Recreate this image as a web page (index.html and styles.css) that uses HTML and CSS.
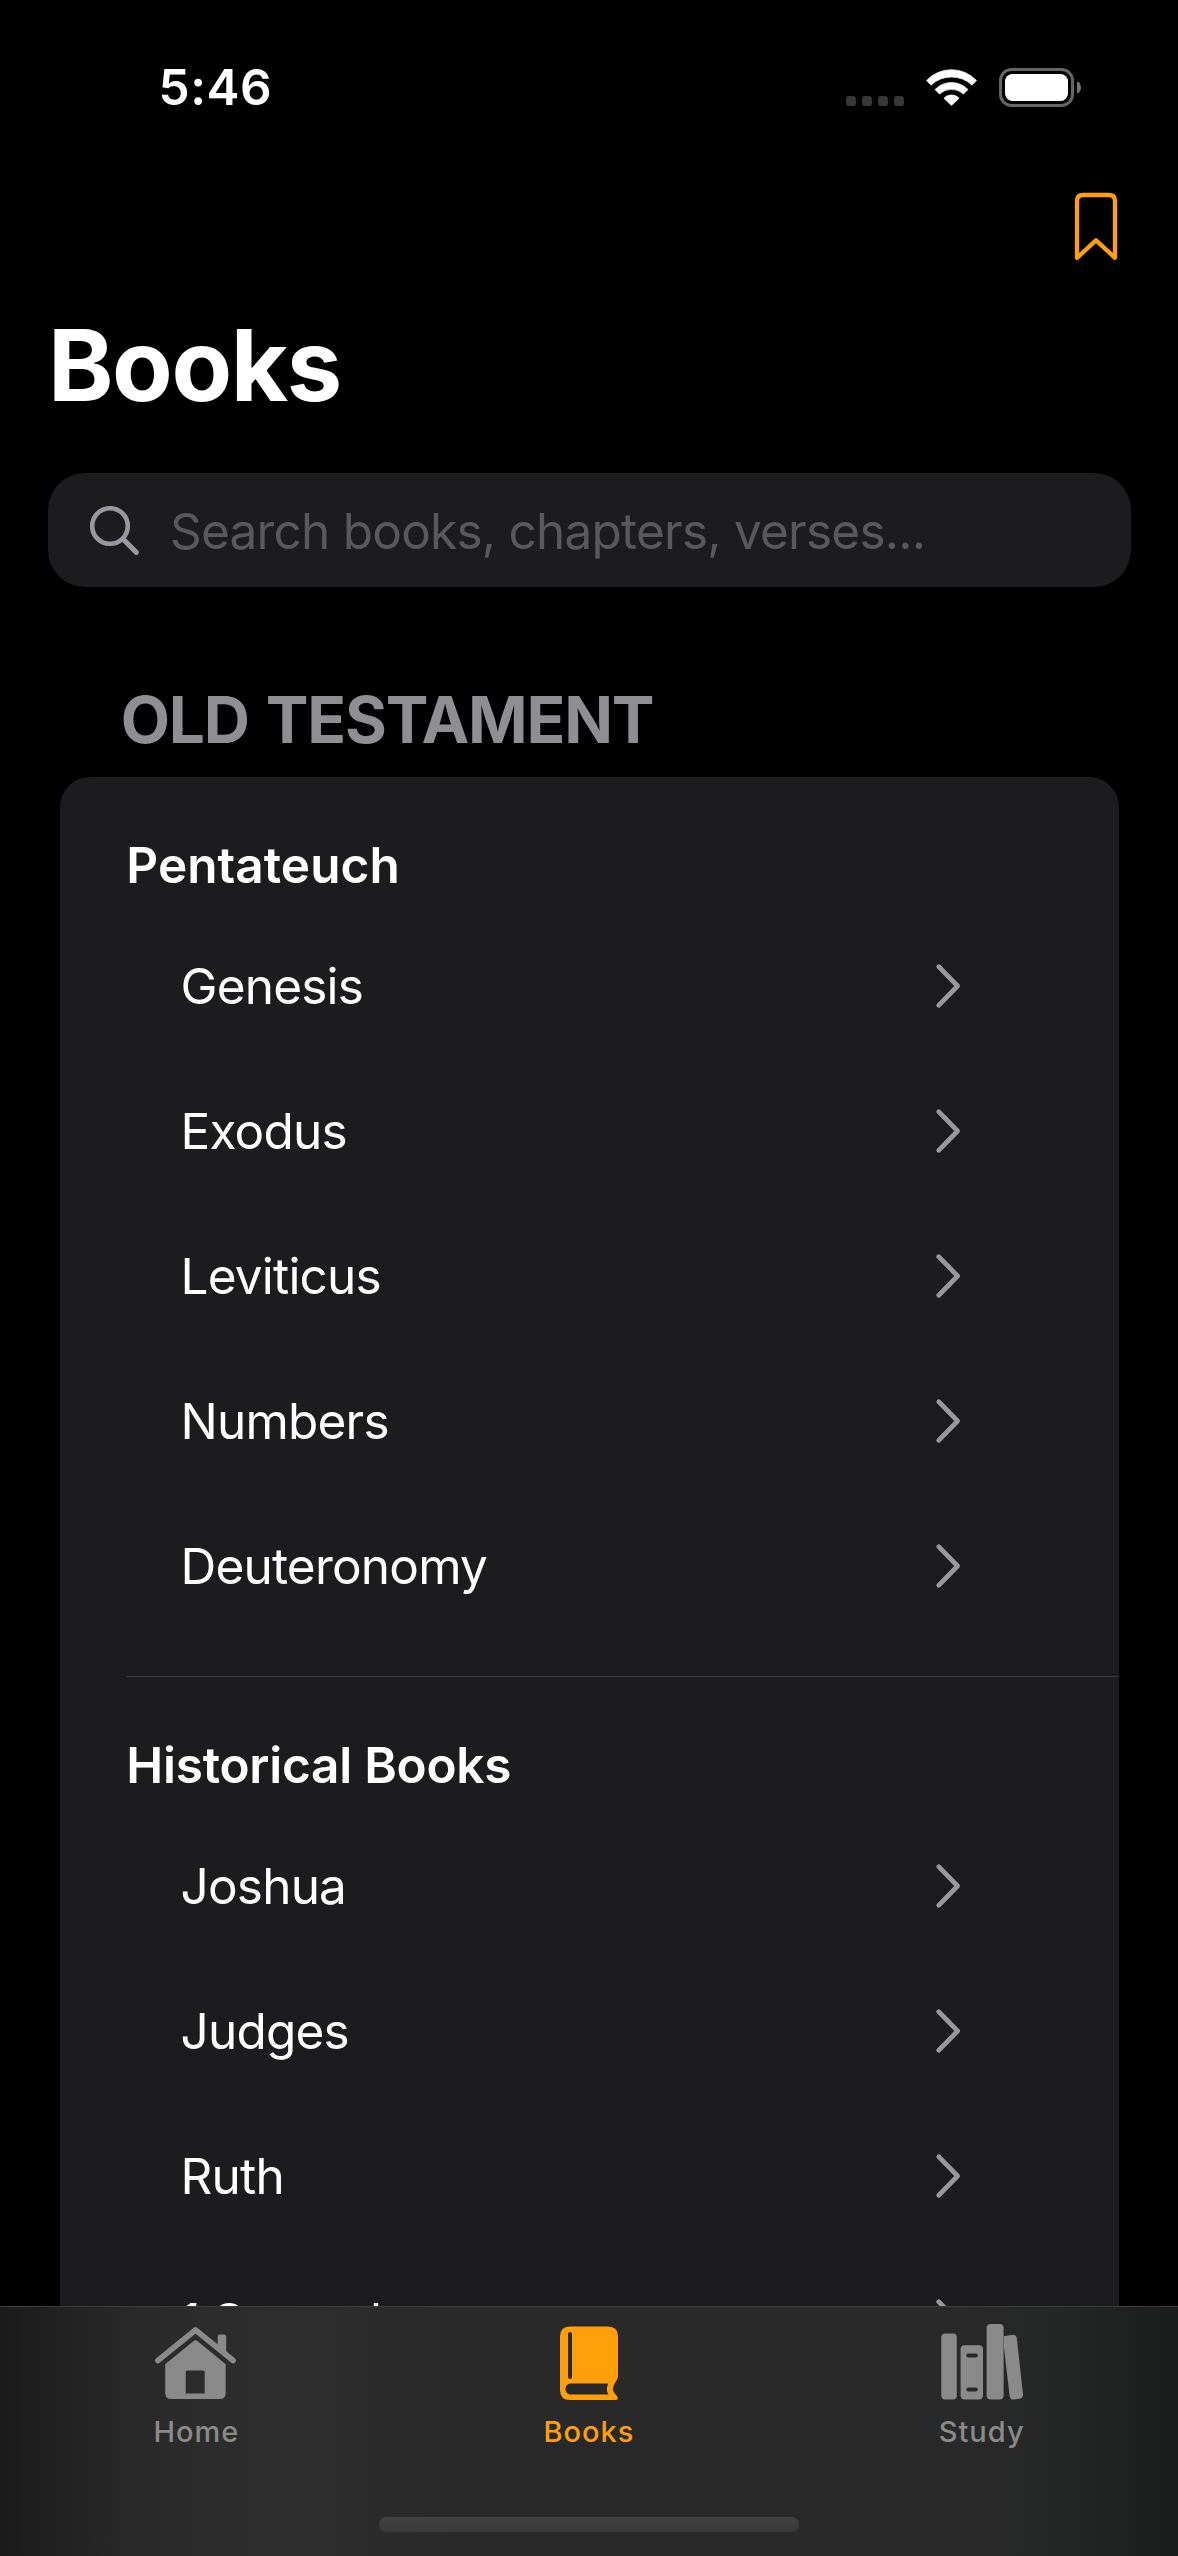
FILE: index.html
```html
<!DOCTYPE html>
<html lang="en">
<head>
<meta charset="utf-8">
<title>Books</title>
<link rel="stylesheet" href="styles.css">
</head>
<body>
<svg width="0" height="0" class="symbols" aria-hidden="true">
  <symbol id="chevron" viewBox="0 0 26 46"><path d="M3.7 3.7 22.6 23 3.7 42.3" fill="none" stroke="currentColor" stroke-width="4.7" stroke-linecap="round" stroke-linejoin="round"/></symbol>
</svg>
<div class="app">
  <main class="screen">
    <header class="status">
      <time class="clock">5:46</time>
      <div class="indicators">
        <div class="signal"><i></i><i></i><i></i><i></i></div>
        <svg class="wifi" width="51" height="37" viewBox="0 0 51 37" fill="#fff">
          <path stroke="#fff" stroke-width=".7" stroke-linejoin="round" d="M.5 11.6A34 34 0 0 1 50.5 11.6L46 16.2A29.7 29.7 0 0 0 5 16.2ZM9 20.5A23 23 0 0 1 42 20.5L37.5 25A17.7 17.7 0 0 0 13.5 25ZM17.9 29.2A10.4 10.4 0 0 1 33.1 29.2L25.5 36.6Z"/>
        </svg>
        <svg class="battery" width="82" height="39" viewBox="0 0 82 39">
          <rect x="1.5" y="1.5" width="72" height="36" rx="11" fill="none" stroke="#666" stroke-width="3"/>
          <rect x="6" y="6" width="63" height="27" rx="7.5" fill="#fff"/>
          <path d="M78 13.2C83.3 15.5 83.3 23.5 78 25.8Z" fill="#757575"/>
        </svg>
      </div>
    </header>
    <div class="toolbar">
      <svg width="44" height="70" viewBox="0 0 44 70"><path d="M3 65.8V9Q3 3 9 3H35Q41 3 41 9V65.8L22 48.3Z" fill="none" stroke="#ff9f0a" stroke-width="4.3" stroke-linejoin="round"/></svg>
    </div>
    <h1 class="title">Books</h1>
    <div class="search">
      <svg width="50" height="50" viewBox="0 0 50 50" fill="none" stroke="#98989f" stroke-width="4.6" stroke-linecap="round"><circle cx="20" cy="20" r="17.8"/><path d="M33 33 46.3 46.3" stroke-width="5.2"/></svg>
      <span>Search books, chapters, verses...</span>
    </div>
    <h2 class="testament">OLD TESTAMENT</h2>
    <div class="card">
      <section class="group">
        <h3>Pentateuch</h3>
        <ul>
          <li>Genesis<svg class="chev"><use href="#chevron"/></svg></li>
          <li>Exodus<svg class="chev"><use href="#chevron"/></svg></li>
          <li>Leviticus<svg class="chev"><use href="#chevron"/></svg></li>
          <li>Numbers<svg class="chev"><use href="#chevron"/></svg></li>
          <li>Deuteronomy<svg class="chev"><use href="#chevron"/></svg></li>
        </ul>
      </section>
      <section class="group">
        <h3 class="long">Historical Books</h3>
        <ul>
          <li>Joshua<svg class="chev"><use href="#chevron"/></svg></li>
          <li>Judges<svg class="chev"><use href="#chevron"/></svg></li>
          <li>Ruth<svg class="chev"><use href="#chevron"/></svg></li>
          <li>1 Samuel<svg class="chev"><use href="#chevron"/></svg></li>
        </ul>
      </section>
    </div>
  </main>
  <footer class="tabbar">
    <nav class="tabs">
      <a class="tab">
        <svg width="90" height="80" viewBox="0 0 90 80" fill="currentColor">
          <path d="M6.9 36.5 44.5 6 82.1 36.5" fill="none" stroke="currentColor" stroke-width="5.6" stroke-linecap="round" stroke-linejoin="round"/>
          <path d="M66.7 24V12.5Q66.7 10.5 68.7 10.5H73.2Q75.2 10.5 75.2 12.5V31Z"/>
          <path fill-rule="evenodd" d="M42.6 17Q44.5 15.4 46.4 17L74.7 40.3V69Q74.7 75 68.7 75H20.2Q14.2 75 14.2 69V40.3ZM36.2 46.5Q34.7 46.5 34.7 48V69.5H53.7V48Q53.7 46.5 52.2 46.5Z"/>
        </svg>
        <span>Home</span>
      </a>
      <a class="tab active">
        <svg width="90" height="80" viewBox="0 0 90 80" fill="currentColor">
          <path fill-rule="evenodd" d="M26 2.5H64Q74 2.5 74 12.5V52Q74 55.5 71.5 58Q66.3 65 71.5 70.5L73 72Q75.2 75.8 71.5 76H26Q16 76 16 66V12.5Q16 2.5 26 2.5ZM26 8Q24 8 24 10V53Q24 55 26 55Q28 55 28 53V10Q28 8 26 8ZM27 59.5C19.7 59.5 19.7 70.5 27 70.5H64.4Q61.3 65 64.3 59.5Z"/>
        </svg>
        <span>Books</span>
      </a>
      <a class="tab">
        <svg width="90" height="80" viewBox="0 0 90 80" fill="currentColor">
          <rect x="4.3" y="9.5" width="15.5" height="66" rx="4"/>
          <path fill-rule="evenodd" d="M27.6 21.3H42Q46 21.3 46 25.3V71.5Q46 75.5 42 75.5H27.6Q23.6 75.5 23.6 71.5V25.3Q23.6 21.3 27.6 21.3ZM31.3 29.5A2 2 0 0 0 31.3 33.5H38.8A2 2 0 0 0 38.8 29.5ZM31.3 63.5A2 2 0 0 0 31.3 67.5H38.8A2 2 0 0 0 38.8 63.5Z"/>
          <rect x="49.6" y="0" width="17" height="75.5" rx="4"/>
          <path d="M66.8 12.2 75.5 10.7Q79.2 10.3 79.8 14L86 70.3Q86.2 74 82.5 74.7L76.5 75.6Q73.3 75.8 72.7 72.5L66.8 22Z"/>
        </svg>
        <span>Study</span>
      </a>
    </nav>
    <div class="home-indicator"></div>
  </footer>
</div>
</body>
</html>
```
FILE: styles.css
```css
* { box-sizing: border-box; }
body { margin: 0; background: #000; color: #fff; font-family: "Inter", "Liberation Sans", sans-serif; }
h1, h2, h3, ul { margin: 0; padding: 0; list-style: none; }
svg { display: block; flex: none; }
.symbols { display: none; }

.app { display: flex; flex-direction: column; width: 1178px; height: 2556px; overflow: hidden; }
.screen { display: flex; flex-direction: column; height: 2306px; flex: none; overflow: hidden; }

.status { display: flex; justify-content: space-between; align-items: center; height: 175px; flex: none; padding: 0 97px 0 158.5px; }
.clock { font-size: 49.5px; font-weight: 600; line-height: 61px; letter-spacing: 0.54px; }
.indicators { display: flex; align-items: flex-end; }
.signal { display: flex; gap: 6px; margin: 0 22px 1px 0; }
.signal i { width: 10px; height: 10px; border-radius: 3px; background: #363636; }
.wifi { margin: 0 22px 1px 0; }

.toolbar { display: flex; justify-content: flex-end; height: 109px; flex: none; padding: 17px 60px 0 0; }
.title { height: 162px; flex: none; padding-left: 48px; font-size: 99px; font-weight: 700; line-height: 162px; letter-spacing: -1.39px; }

.search { display: flex; align-items: center; gap: 30px; height: 114px; flex: none; margin: 27px 47px 0 48px; padding: 1px 0 0 42px; border-radius: 37px; background: #1c1c1e; color: #59595c; font-size: 49.5px; letter-spacing: -0.774px; }
.testament { flex: none; height: 190px; padding: 93px 0 0 120.7px; color: #8e8e93; font-size: 64px; font-weight: 700; line-height: 80px; letter-spacing: -1.2px; word-spacing: 3px; }

.card { flex: none; margin: 0 59px 0 60px; border-radius: 30px; background: #1c1c1e; }
.group h3 { height: 137px; padding: 39px 0 0 66.3px; font-size: 49.5px; font-weight: 600; line-height: 98px; letter-spacing: 0.05px; }
.group h3.long { letter-spacing: -0.236px; }
.group li { display: flex; align-items: center; justify-content: space-between; height: 145px; padding: 0 158px 1px 120.5px; font-size: 49.5px; line-height: 60px; letter-spacing: -0.8px; }
.chev { width: 26px; height: 46px; color: #98989f; }
.group::after { content: ""; display: block; height: 37px; margin-left: 66px; border-bottom: 1px solid #3d3d40; }

.tabbar { flex: none; height: 250px; padding-top: 17px; border-top: 1px solid #3d3d3f; color: #8a8a8a;
  background: linear-gradient(90deg, #1b1b1b 0, #202120 55px, #272827 125px, #2c2c2c 200px, #2d2d2d 310px, #292929 470px, #292929 960px, #252626 1060px, #1b1d1c 1178px); }
.tabs { display: grid; grid-template-columns: repeat(3, 1fr); height: 193px; }
.tab { display: flex; flex-direction: column; align-items: center; font-size: 29px; font-weight: 500; line-height: 36px; letter-spacing: 1px; }
.tab span { margin-top: 10px; }
.tab.active { color: #ff9f0a; }
.home-indicator { width: 420px; height: 15px; margin: 0 auto; border-radius: 8px; background: linear-gradient(#414141, #3a3a3a); }
```
